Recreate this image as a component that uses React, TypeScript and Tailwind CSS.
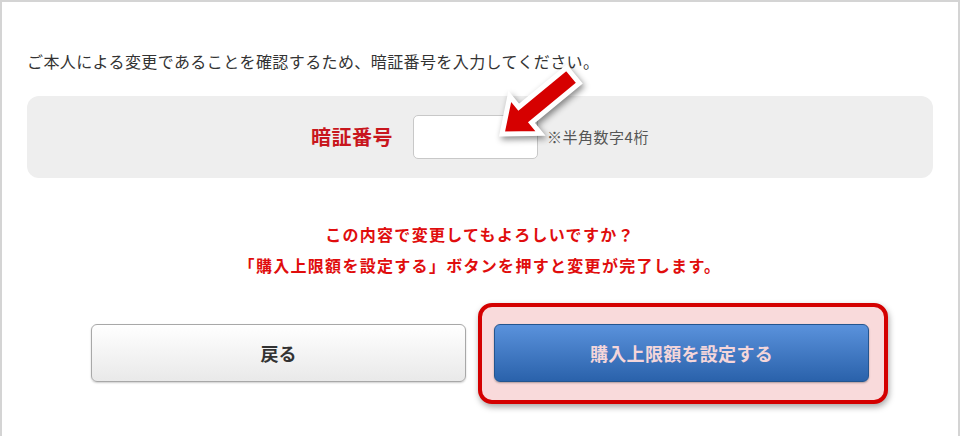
export default function App() {
  return (
    <div
      className="relative w-[960px] h-[436px] overflow-hidden bg-white border-t-2 border-x-2 border-[#d4d4d4]"
      style={{ fontFamily: '"Noto Sans CJK JP", "Noto Sans", sans-serif' }}
    >
      <div className="px-[25px] pt-[47px]">
        <p className="text-[16px] leading-[24px] tracking-[0.4px] text-[#333]">
          ご本人による変更であることを確認するため、暗証番号を入力してください。
        </p>

        {/* PIN panel */}
        <div className="mt-[23px] h-[82px] rounded-[12px] bg-[#eeeeee] flex items-center justify-center">
          <span className="text-[20px] font-bold text-[#c8161d] tracking-[0.5px]">暗証番号</span>
          <input
            type="text"
            className="ml-[20px] w-[125px] h-[44px] rounded-[5px] border border-[#c8c8c8] bg-white"
          />
          <span className="ml-[9px] text-[15px] tracking-[0.5px] text-[#555]">※半角数字4桁</span>
        </div>

        {/* confirm message */}
        <div className="mt-[41px] text-center text-[16px] font-bold leading-[31px] tracking-[1.3px] text-[#e00d0d]">
          <p>この内容で変更してもよろしいですか？</p>
          <p>「購入上限額を設定する」ボタンを押すと変更が完了します。</p>
        </div>

        {/* buttons */}
        <div className="mt-[43px] flex justify-center gap-[28px]">
          <button className="w-[375px] h-[58px] rounded-[6px] border border-[#a8a8a8] bg-gradient-to-b from-white to-[#e9e9e9] shadow-[0_1px_2px_rgba(0,0,0,0.2)] text-[18px] font-bold text-[#333]">
            戻る
          </button>
          <div className="relative">
            <div className="absolute -left-[16px] -right-[19px] -top-[21px] -bottom-[22px] rounded-[14px] border-[4px] border-[#d40000] bg-[#f9dadb] shadow-[1px_3px_6px_rgba(0,0,0,0.35)]" />
            <button className="relative w-[375px] h-[58px] rounded-[6px] border border-[#24558f] bg-gradient-to-b from-[#5a92dc] to-[#2a62ab] shadow-[0_1px_2px_rgba(0,0,0,0.3)] text-[18px] font-bold tracking-[0.3px] text-[#f4d6da]">
              購入上限額を設定する
            </button>
          </div>
        </div>
      </div>

      {/* red pointer arrow */}
      <svg
        className="absolute left-[478px] top-[53px]"
        width="110"
        height="95"
        viewBox="0 0 110 95"
        style={{ filter: "drop-shadow(2px 3px 3px rgba(0,0,0,0.45))" }}
      >
        <polygon
          points="22,79 60.4,78.4 51.5,67.6 99.3,28.1 86.5,12.7 38.7,52.2 29.8,41.4"
          fill="#d60000"
          stroke="white"
          strokeWidth="5"
          strokeLinejoin="miter"
        />
      </svg>
    </div>
  );
}
